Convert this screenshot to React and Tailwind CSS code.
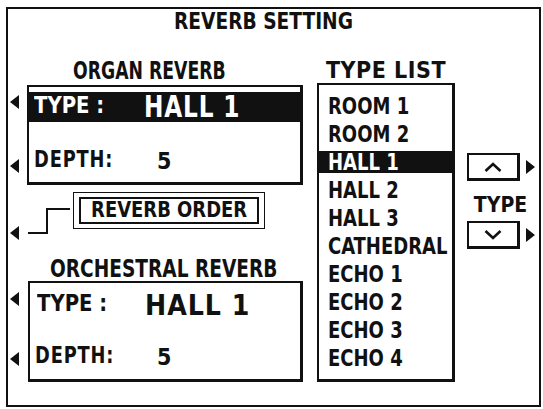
import React from 'react';

const items = ['ROOM 1', 'ROOM 2', 'HALL 1', 'HALL 2', 'HALL 3', 'CATHEDRAL', 'ECHO 1', 'ECHO 2', 'ECHO 3', 'ECHO 4'];

function Txt({ className = '', children }) {
  return <span className={`inline-block whitespace-nowrap leading-none ${className}`}>{children}</span>;
}

function ArrowLeft() {
  return (
    <svg width="9" height="14" viewBox="0 0 9 14" className="block shrink-0">
      <polygon points="9,0 9,14 0,7" fill="#111" />
    </svg>
  );
}

function ArrowRight() {
  return (
    <svg width="9" height="14" viewBox="0 0 9 14" className="block shrink-0">
      <polygon points="0,0 0,14 9,7" fill="#111" />
    </svg>
  );
}

function Chevron({ up }) {
  return (
    <svg width="18" height="10" viewBox="0 0 18 10" className="block">
      <polyline
        points={up ? '1.5,9 9,2 16.5,9' : '1.5,1 9,8 16.5,1'}
        fill="none"
        stroke="#111"
        strokeWidth="2.6"
      />
    </svg>
  );
}

function StepButton({ up }) {
  return (
    <div className="flex items-center">
      <div className="w-[53px] h-[28px] border-2 border-r-[3px] border-b-[3px] border-[#111] flex items-center justify-center">
        <Chevron up={up} />
      </div>
      <div className="ml-[6px]">
        <ArrowRight />
      </div>
    </div>
  );
}

export default function App() {
  return (
    <div className="w-[543px] h-[409px] bg-white text-[#111] font-bold font-['DejaVu_Sans_Condensed','DejaVu_Sans',sans-serif] overflow-hidden pt-[7px] pl-[6px]">
      <div className="w-[535px] h-[400px] border-2 border-[#111] flex flex-col">
        {/* title */}
        <div className="h-[25px] flex items-center justify-center pr-[20px]">
          <Txt className="text-[23px] scale-x-[0.9]">REVERB SETTING</Txt>
        </div>

        <div className="flex">
          {/* left column */}
          <div className="w-[295px] flex flex-col">
            <div className="mt-[27px] h-[20px] mb-[4px] flex items-center pl-[65px]">
              <Txt className="text-[24px] scale-x-[0.8] origin-left">ORGAN REVERB</Txt>
            </div>

            {/* organ box */}
            <div className="flex">
              <div className="w-[19px] h-[100px] flex flex-col pl-[2px]">
                <div className="h-[34px] flex items-center"><ArrowLeft /></div>
                <div className="mt-[30px] h-[34px] flex items-center"><ArrowLeft /></div>
              </div>
              <div className="w-[276px] h-[100px] border-l-2 border-t-2 border-r-[3px] border-b-[3px] border-[#111] pt-[5px]">
                <div className="h-[30px] bg-[#111] text-white flex items-center pl-[5px]">
                  <div className="w-[110px]">
                    <Txt className="text-[23px] scale-x-[0.95] origin-left">TYPE :</Txt>
                  </div>
                  <Txt className="text-[30px] tracking-[1px] scale-x-[0.86] origin-left">HALL 1</Txt>
                </div>
                <div className="mt-[19px] h-[40px] flex items-center pl-[5px]">
                  <div className="w-[123px]">
                    <Txt className="text-[23px] tracking-[1px] scale-x-[0.86] origin-left">DEPTH:</Txt>
                  </div>
                  <Txt className="text-[23px]">5</Txt>
                </div>
              </div>
            </div>

            {/* reverb order */}
            <div className="mt-[7px] h-[48px] flex">
              <div className="w-[19px] h-[48px] flex flex-col justify-end pl-[2px]">
                <ArrowLeft />
              </div>
              <svg width="46" height="48" viewBox="0 0 46 48" className="block shrink-0">
                <polyline points="1,41 20,41 20,17 43,17" fill="none" stroke="#111" strokeWidth="2" />
              </svg>
              <div className="w-[192px] h-[37px] border-[1.5px] border-[#111] px-[5px] py-[4px]">
                <div className="h-full border-2 border-[#111] flex items-center justify-center">
                  <Txt className="text-[21px] scale-x-[0.95]">REVERB ORDER</Txt>
                </div>
              </div>
            </div>

            <div className="mt-[18px] h-[21px] mb-[2px] flex items-center pl-[42px]">
              <Txt className="text-[24px] scale-x-[0.86] origin-left">ORCHESTRAL REVERB</Txt>
            </div>

            {/* orchestral box */}
            <div className="flex">
              <div className="w-[20px] h-[101px] flex flex-col pl-[2px]">
                <div className="mt-[3px] h-[30px] flex items-center"><ArrowLeft /></div>
                <div className="mt-[30px] h-[30px] flex items-center"><ArrowLeft /></div>
              </div>
              <div className="w-[275px] h-[101px] border-l-2 border-t-2 border-r-[3px] border-b-[3px] border-[#111] pt-[7px]">
                <div className="h-[30px] flex items-center pl-[7px]">
                  <div className="w-[108px]">
                    <Txt className="text-[23px] scale-x-[0.95] origin-left">TYPE :</Txt>
                  </div>
                  <Txt className="text-[29px] tracking-[1px] scale-x-[0.97] origin-left">HALL 1</Txt>
                </div>
                <div className="mt-[22px] h-[30px] flex items-center pl-[5px]">
                  <div className="w-[122px]">
                    <Txt className="text-[23px] tracking-[1px] scale-x-[0.86] origin-left">DEPTH:</Txt>
                  </div>
                  <Txt className="text-[23px]">5</Txt>
                </div>
              </div>
            </div>
          </div>

          {/* type list */}
          <div className="ml-[14px] w-[138px] flex flex-col">
            <div className="mt-[26px] h-[21px] mb-[2px] flex items-center justify-center">
              <Txt className="text-[23px] tracking-[0.5px]">TYPE LIST</Txt>
            </div>
            <div className="h-[299px] border-l-2 border-t-2 border-r-[3px] border-b-[3px] border-[#111] pt-[7px]">
              {items.map((it) => (
                <div key={it} className="h-[28px] flex items-center">
                  <div
                    className={`w-full h-[22px] flex items-center pl-[9px] ${
                      it === 'HALL 1' ? 'bg-[#111] text-white' : ''
                    }`}
                  >
                    <Txt className="text-[23px] scale-x-[0.87] origin-left">{it}</Txt>
                  </div>
                </div>
              ))}
            </div>
          </div>

          {/* up / down */}
          <div className="ml-[12px] flex flex-col">
            <div className="mt-[119px]">
              <StepButton up />
            </div>
            <div className="mt-[8px] h-[32px] flex items-center w-[53px] justify-center pl-[14px]">
              <Txt className="text-[21px]">TYPE</Txt>
            </div>
            <StepButton />
          </div>
        </div>
      </div>
    </div>
  );
}
